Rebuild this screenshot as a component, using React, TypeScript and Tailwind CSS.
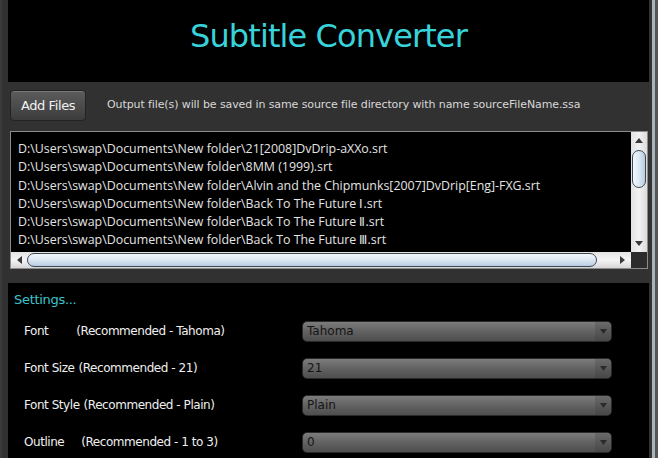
import React from 'react';

const files = [
  'D:\\Users\\swap\\Documents\\New folder\\21[2008]DvDrip-aXXo.srt',
  'D:\\Users\\swap\\Documents\\New folder\\8MM (1999).srt',
  'D:\\Users\\swap\\Documents\\New folder\\Alvin and the Chipmunks[2007]DvDrip[Eng]-FXG.srt',
  'D:\\Users\\swap\\Documents\\New folder\\Back To The Future Ⅰ.srt',
  'D:\\Users\\swap\\Documents\\New folder\\Back To The Future Ⅱ.srt',
  'D:\\Users\\swap\\Documents\\New folder\\Back To The Future Ⅲ.srt',
  'D:\\Users\\swap\\Documents\\New folder\\Batman Begins.srt',
];

const settings = [
  { label: 'Font', hint: '(Recommended - Tahoma)', gap: 'ml-[28px]', value: 'Tahoma' },
  { label: 'Font Size', hint: '(Recommended - 21)', gap: 'ml-[4px]', value: '21' },
  { label: 'Font Style', hint: '(Recommended - Plain)', gap: 'ml-[4px]', value: 'Plain' },
  { label: 'Outline', hint: '(Recommended - 1 to 3)', gap: 'ml-[17px]', value: '0' },
];

const Arrow: React.FC<{ dir: 'up' | 'down' | 'left' | 'right' }> = ({ dir }) => {
  const pts = {
    up: '0,6 4,1 8,6',
    down: '0,1 4,6 8,1',
    left: '6,0 1,4 6,8',
    right: '1,0 6,4 1,8',
  }[dir];
  const vert = dir === 'up' || dir === 'down';
  return (
    <svg width={vert ? 8 : 7} height={vert ? 7 : 8} viewBox={vert ? '0 0 8 7' : '0 0 7 8'}>
      <polygon points={pts} fill="#3a3a3a" />
    </svg>
  );
};

const Dropdown: React.FC<{ value: string }> = ({ value }) => (
  <div className="w-[310px] h-[21px] flex rounded-[5px] border border-[#2a2a2a] bg-gradient-to-b from-[#7c7c7c] via-[#626262] to-[#4e4e4e] overflow-hidden">
    <div className="flex-1 pl-[4px] flex items-center text-[12px] text-[#151515]">{value}</div>
    <div className="w-[16px] flex items-center justify-center bg-gradient-to-b from-[#6a6a6a] to-[#474747]">
      <svg width="7" height="5" viewBox="0 0 7 5">
        <polygon points="0,0 7,0 3.5,5" fill="#2a2a2a" />
      </svg>
    </div>
  </div>
);

export default function App() {
  return (
    <div className="w-[658px] h-[458px] bg-[#313131] flex overflow-hidden font-['DejaVu_Sans',sans-serif]">
      <div className="w-[8px] border-l-2 border-[#3a3a3a]" />
      <div className="w-[641px] flex flex-col">
        <div className="h-[82px] bg-black flex items-center justify-center pb-[10px]">
          <h1 className="text-[32px] text-[#38d3da] tracking-[-0.9px]">Subtitle Converter</h1>
        </div>

        <div className="flex items-center mt-[8px] ml-[2px] h-[31px]">
          <button className="w-[76px] h-[31px] rounded-[4px] border border-[#222] bg-gradient-to-b from-[#5c5c5c] to-[#3c3c3c] text-[#f2f2f2] text-[13px] tracking-[-0.4px] shadow-[inset_0_1px_0_#777]">
            Add Files
          </button>
          <span className="ml-[21px] text-[11px] text-[#d8d8d8] tracking-[-0.1px]">
            Output file(s) will be saved in same source file directory with name sourceFileName.ssa
          </span>
        </div>

        <div className="mt-[10px] ml-[2px] w-[638px] h-[138px] border border-[#8c8c8c] bg-black flex flex-col">
          <div className="flex flex-1 min-h-0">
            <div className="flex-1 overflow-hidden pl-[7px] pt-[8px] text-[12.4px] leading-[18.3px] text-[#e4e4e4] font-['Open_Sans',sans-serif] whitespace-nowrap">
              {files.map((f) => (
                <div key={f}>{f}</div>
              ))}
            </div>
            <div className="w-[16px] flex flex-col bg-gradient-to-r from-[#e2e2e2] via-[#f2f2f2] to-[#dcdcdc]">
              <div className="h-[17px] flex items-center justify-center"><Arrow dir="up" /></div>
              <div className="flex-1 pt-[1px]">
                <div className="h-[38px] mx-[1px] rounded-[7px] border border-[#3c4a58] bg-gradient-to-r from-[#f4f8fc] via-[#dce8f4] to-[#b8cce0]" />
              </div>
              <div className="h-[17px] flex items-center justify-center"><Arrow dir="down" /></div>
            </div>
          </div>
          <div className="h-[16px] flex">
            <div className="flex-1 flex bg-gradient-to-b from-[#e4e4e4] via-[#f4f4f4] to-[#d6d6d6]">
              <div className="w-[16px] flex items-center justify-center"><Arrow dir="left" /></div>
              <div className="w-[570px] my-[1px] rounded-[7px] border border-[#3c4a58] bg-gradient-to-b from-[#f4f8fc] via-[#dce8f4] to-[#b8cce0]" />
              <div className="flex-1 flex items-center justify-end pr-[5px]"><Arrow dir="right" /></div>
            </div>
            <div className="w-[16px] bg-[#2c2c2c]" />
          </div>
        </div>

        <div className="mt-[14px] flex-1 bg-black pl-[6px] pt-[7px]">
          <div className="text-[13px] text-[#3ec3cc] tracking-[-0.3px]">Settings...</div>
          <div className="mt-[11px] flex flex-col gap-[16px]">
            {settings.map((s) => (
              <div key={s.label} className="flex items-center h-[21px]">
                <div className="w-[288px] pl-[10px] text-[12px] text-[#f0f0f0] tracking-[-0.45px] whitespace-nowrap">
                  {s.label}
                  <span className={s.gap}>{s.hint}</span>
                </div>
                <Dropdown value={s.value} />
              </div>
            ))}
          </div>
        </div>
      </div>
      <div className="w-[3px] bg-[#333]" />
      <div className="w-[3px] bg-[#a8b4bc]" />
      <div className="w-[3px] bg-[#555]" />
    </div>
  );
}
